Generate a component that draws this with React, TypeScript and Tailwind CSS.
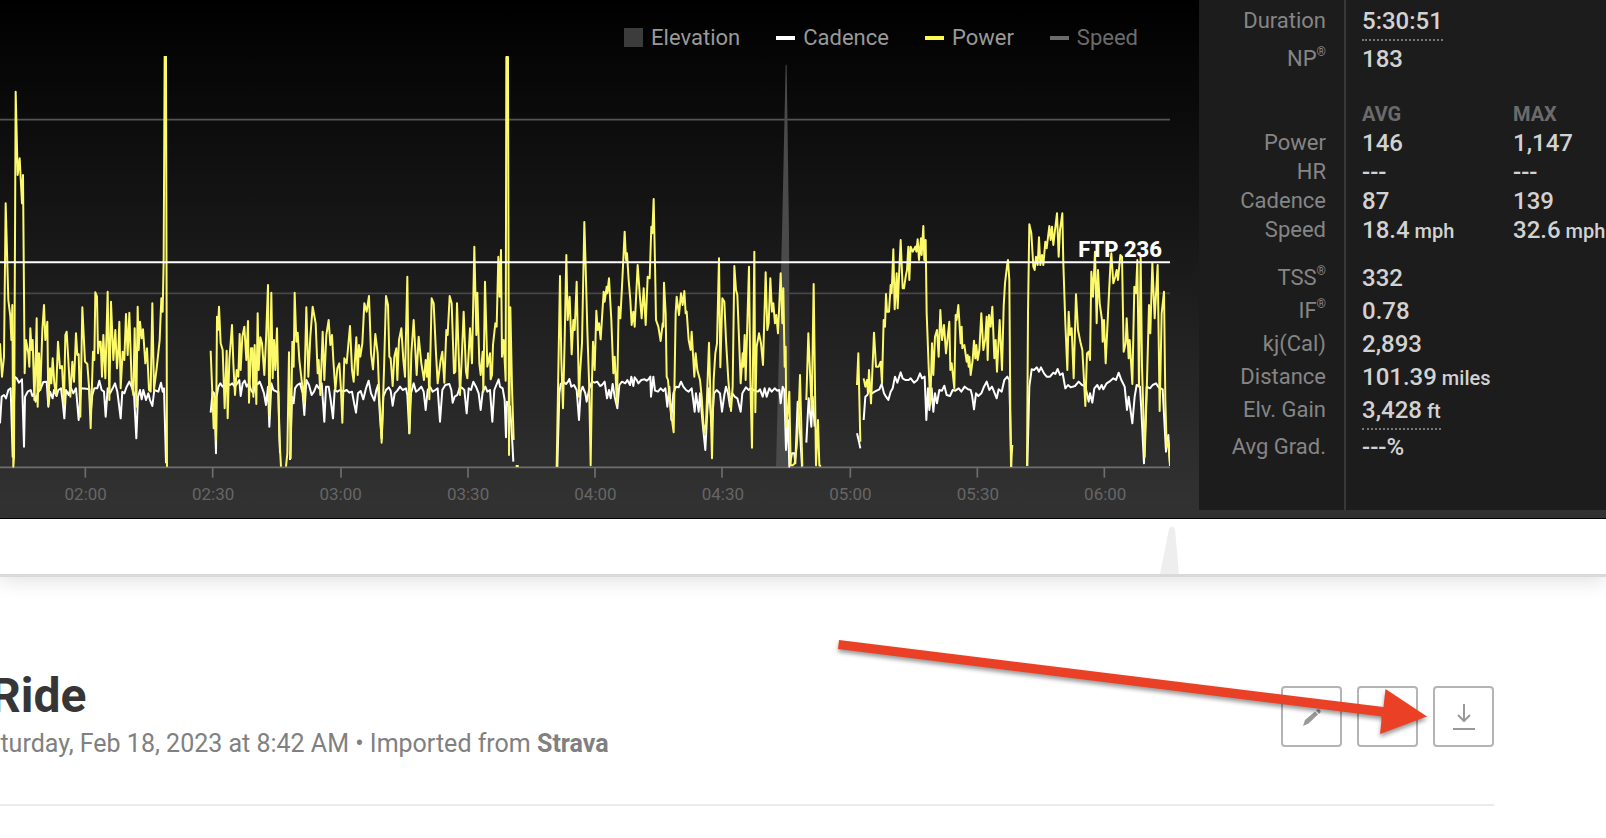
import type { ReactNode } from "react";

interface Segment {
  x: number;
  y: number;
  power: string[];
  cadence: string[];
}

interface StatRow {
  label: string;
  registered?: boolean;
  avg: string;
  max?: string;
  unit?: string;
  dotted?: boolean;
  className: string;
}

// Samples are stored per stretch of the ride, at three units per pixel
const segments: Segment[] = [
  {
    x: 0,
    y: 120,
    power: [
      "0,910 6,1010 12,950 17,490 25,780 31,830 34,900 37,795 40,1280 42,1250 47,155 53,405 59,355 66,490 69,405 74,1000 78,900 85,940 88,980 91,865 95,930 98,900 103,1080 106,1000 110,835 113,1100 117,940 121,1050 127,870 132,795 136,900 142,845 145,1095 150,985 154,1030 158,955 163,1030 168,1065 174,905 180,985 186,978 192,1095 196,885 200,875 205,960 211,1070 217,965 222,1025 228,880 232,945 236,942 241,1130 247,802 255,965 262,972 267,1040 272,1165 279,935 283,960 286,757 291,770 294,940 298,905 302,905 306,1010 310,885 316,1015 323,755 328,1080 333,785 340,960 346,870 351,985 355,930 358,845 362,1045 368,935 373,960 378,822 383,945 388,818 395,1030 400,1065 404,865 409,1100 413,800 416,930 420,845 425,895 429,868 436,970 441,925 447,1050 452,1055 457,790 462,1050 470,985 479,900 484,775 488,815 491,660 494,50 498,50 501,1280",
    ],
    cadence: [
      "0,1150 5,1070 12,1065 18,1075 25,1050 32,1045 38,1250 44,1010 50,1015 57,1028 66,1018 72,1220 75,1070 83,1055 92,1050 97,1068 103,1060 107,1085 113,1060 122,1045 130,1026 140,1025 145,1100 150,1055 158,1075 162,1050 170,1068 175,1050 183,1045 188,1085 193,1135 198,1050 206,1065 212,1042 220,1060 228,1045 236,1140 243,1045 260,1046 268,1048 272,1120 277,1065 283,1045 292,1045 298,1022 305,1050 312,1055 317,1130 323,1045 330,1060 338,1045 345,1030 352,1055 362,1135 367,1055 373,1060 380,1040 388,1025 397,1045 402,1060 409,1195 414,1070 420,1050 425,1078 430,1050 438,1080 445,1060 450,1080 457,1098 463,1050 475,1055 483,1028 488,1055 492,1045 498,1270",
    ],
  },
  {
    x: 600,
    y: 660,
    power: [
      "32,392 41,625 45,530 48,660 51,290 54,330 57,260 62,370 68,390 74,565 80,392 83,595 88,420 96,315 100,430 105,525 110,450 115,470 119,342 122,450 127,350 133,320 139,420 144,303 147,548 153,385 157,385 160,530 164,375 169,552 173,280 176,450 181,352 186,370 193,465 198,360 204,195 208,588 214,218 218,475 222,360 226,450 231,325 238,650 243,740",
      "258,740 262,700 267,397 272,715 277,365 281,440 284,218 289,365 293,338 298,420 306,490 312,550 319,262 325,470 331,350 338,260 347,310 353,460 356,420 361,525 368,335 373,480 379,345 386,300 391,375 396,345 400,420 406,510 412,445 418,430 423,510 427,608 433,415 440,430 450,318 456,450 461,485 469,352 473,465 477,375 481,410 487,370 493,250 500,275 507,228 513,400 519,448 526,342 533,400 538,530 545,668 552,450 558,228 564,255 568,410 572,415 578,498 583,410 589,385 592,480 597,360 604,325 610,420 615,470 622,170 628,640 634,400 641,300 650,465 656,350 664,430 672,480 677,420 681,470 684,400 688,538 695,235 701,250 708,400 713,490 722,420 727,395 733,488 739,330 743,345 749,228 755,250 762,460 766,455 771,250 780,525 785,420 791,275 798,455 802,475 810,325 816,430 823,80 829,345 832,218 838,430 842,465 848,395 850,515 855,185 862,440 870,400 872,478 876,465 879,375 886,310 890,320 895,110 899,230 903,90 906,410 911,360 917,482 919,-489 924,-489 927,705 931,262 936,500 941,660",
      "947,738 956,738",
    ],
    cadence: [
      "32,578 38,515 43,520 48,700 50,530 55,500 61,490 68,500 75,498 82,490 90,495 97,490 104,500 112,490 118,480 122,528 128,490 134,482 140,500 147,490 153,510 160,520 166,495 173,492 179,485 185,500 192,520 198,555 204,500 208,620 214,490 220,510 230,515 235,515 240,700",
      "270,720 276,530 281,550 285,505 292,495 300,490 308,520 313,585 319,480 327,495 335,525 342,515 350,495 357,505 365,490 373,605 378,500 386,500 392,540 399,595 404,510 412,515 420,510 430,515 440,510 448,518 456,515 462,548 468,578 474,520 482,513 490,538 498,505 506,482 513,520 523,542 529,510 534,495 540,590 545,655 550,530 558,510 566,502 572,512 578,557 584,520 592,512 600,500 608,510 618,505 622,525 628,640 633,520 641,490 648,515 655,510 664,500 671,515 677,570 683,510 690,500 698,515 706,510 713,505 720,605 727,510 736,495 748,492 754,510 758,548 764,530 772,525 780,500 788,505 793,510 800,580 806,505 813,510 820,485 828,500 836,520 842,570 848,515 856,500 862,515 870,510 877,605 883,510 889,495 896,478 900,500 908,505 914,540 918,652 921,545 930,560 936,650 940,725",
    ],
  },
  {
    x: 1500,
    y: 540,
    power: [
      "170,860 180,288 184,540 189,685 194,480 199,225 203,420 209,350 215,523 220,420 224,450 230,305 237,650 240,580 246,490 253,126 257,260 262,450 267,600 272,856 276,600 279,485 284,570 289,392 293,450 297,430 302,478 311,335 314,365 320,320 322,340 327,295 334,420 340,580 344,530 351,670 356,380 361,415 366,320 374,155 378,240 381,220 386,300 391,360 395,435 400,395 404,440 413,255 419,340 425,415 431,325 437,435 443,290 449,295 454,140 457,160 461,57 465,250 468,420 475,440 482,483 488,430 490,440 492,308 497,400 500,590 504,600 512,690 521,757 527,400 530,350 537,405 543,340 548,375 553,333 557,400 560,395 566,480 572,510 575,455 583,590 587,520 592,570 600,600 605,650 612,760 618,730 627,488 636,835 641,600 646,520 651,490 657,235 661,562 667,355 673,365 678,480 685,600 693,693 698,620 703,258 708,330 712,345 718,500 722,610 728,520 730,560 734,465 737,600 747,260 751,600 756,803 763,215 766,697 770,500 777,460 783,490 789,555 797,277 802,450 806,430 811,295 816,395 820,370 825,430 829,405 834,460 842,280 847,430 850,325 854,560 857,500 859,740 863,700 868,635 872,856 878,856 884,850 890,800 896,700 900,585 907,858",
      "919,660 925,460 935,690 941,312 948,856 954,720 958,856 963,858",
    ],
    cadence: [
      "172,860 178,640 182,612 190,605 198,612 204,605 208,597 214,620 222,615 230,630 237,720 242,635 248,620 256,640 260,665 268,625 276,605 284,608 292,605 300,618 306,615 314,605 321,655 327,630 332,655 338,612 344,650 352,685 358,615 366,605 376,610 382,600 390,615 394,590 400,618 404,592 410,600 415,610 424,600 434,598 440,602 447,596 451,590 453,650 460,590 465,632 474,635 482,625 490,633 496,625 502,680 508,620 514,720 520,640 528,620 536,622 543,605 550,620 558,630 566,635 575,625 584,695 588,640 596,695 600,640 608,730 616,810 622,690 627,625 635,740 642,640 650,630 660,640 666,695 673,645 678,620 684,640 690,680 697,640 704,650 712,655 722,695 727,640 738,622 746,630 752,625 764,632 774,635 780,628 788,650 794,625 800,650 808,625 815,635 824,625 832,632 838,630 842,670 848,620 853,630 858,810 864,720 868,860 876,820 883,820 886,850 893,665 898,720 906,860",
      "919,788 926,655 934,740 938,650 944,740",
    ],
  },
  {
    x: 2520,
    y: 540,
    power: [
      "51,615 55,520 61,785",
      "71,595 76,620 81,600 84,640 87,570 93,670 102,458 108,560 116,560 122,545 126,610 131,420 135,440 138,342 141,395 147,395 152,315 155,340 160,208 164,388 170,280 173,385 177,290 182,180 188,325 192,325 197,290 201,270 205,200 208,300 212,200 218,215 226,200 229,215 233,178 237,240 243,175 245,225 250,138 253,240 257,180 260,400 266,560 271,673 276,490 280,585 285,470 291,450 296,530 301,390 306,480 312,435 318,520 328,425 331,570 335,550 343,625 347,405 350,420 355,375 362,490 365,440 367,505 373,495 380,545 383,525 386,560 388,530 392,585 398,540 402,482 406,535 409,495 413,540 418,510 424,400 430,510 436,475 440,410 443,540 447,405 452,440 457,380 463,535 467,480 471,575 479,420 486,570 491,380 495,310 502,250 504,240 508,300 511,700 513,858 517,795",
      "561,858 564,400 568,133 574,160 580,260 584,270 588,230 593,255 597,172 601,255 606,225 610,255 616,185 620,205 628,138 632,180 636,140 640,195 645,150 651,100 656,230 660,150 667,100 670,250 676,430 682,570 686,395 690,465 695,445 701,595 708,343 714,450 722,490 727,510 732,600 736,678 741,520 746,515 750,540 754,275 759,350 765,215 770,430 774,270 779,370 786,420 788,485 792,420 797,550 805,380 811,260 814,220 820,310 826,290 830,270 834,300 841,225 846,230 851,515 857,490 860,415 866,535 869,480 877,612 883,320 888,340 892,240 897,620 902,230 906,560 914,830 920,640 927,375 931,460 937,250 944,415 953,255 959,693 965,400 972,335 976,660 980,800 985,785 990,858",
    ],
    cadence: [
      "51,760 57,785 61,805",
      "71,720 76,650 82,645 88,630 96,640 104,635 110,632 118,628 125,612 132,640 138,650 145,660 152,635 158,625 165,590 172,608 182,577 188,595 196,600 206,600 212,595 222,608 232,600 240,580 246,595 254,590 259,720 264,625 268,690 275,625 280,695 285,640 291,670 298,630 306,632 313,617 320,645 330,648 338,630 346,632 356,625 364,635 374,620 384,628 392,630 396,645 402,688 408,640 415,648 424,640 432,620 440,605 448,630 456,620 462,635 470,655 476,628 485,635 493,600 502,590 508,600 514,860",
      "562,858 568,620 575,568 582,570 590,562 597,575 603,562 612,580 620,590 630,590 640,578 646,582 653,567 660,585 668,580 676,625 684,615 692,622 705,618 716,605 726,615 736,618 746,665 750,640 757,668 763,625 772,615 778,628 785,615 790,628 800,610 808,605 820,595 828,600 836,578 844,600 854,620 861,690 866,650 877,730 884,650 890,615 900,620 904,690 912,850 920,620 930,625 938,615 948,610 956,622 968,628 978,815 985,765 990,850",
    ],
  },
];

const ticks = [256, 638, 1023, 1404, 1785, 2166, 2551, 2932, 3313];

const times = [
  "02:00",
  "02:30",
  "03:00",
  "03:30",
  "04:00",
  "04:30",
  "05:00",
  "05:30",
  "06:00",
];

const stats: StatRow[] = [
  { label: "Duration", avg: "5:30:51", dotted: true, className: "h-[42px]" },
  { label: "NP", registered: true, avg: "183", className: "h-[34px]" },
];

const averages: StatRow[] = [
  { label: "Power", avg: "146", max: "1,147", className: "h-[29px]" },
  { label: "HR", avg: "---", max: "---", className: "h-[29px]" },
  { label: "Cadence", avg: "87", max: "139", className: "h-[29px]" },
  { label: "Speed", avg: "18.4", max: "32.6", unit: "mph", className: "h-[29px]" },
];

const totals: StatRow[] = [
  { label: "TSS", registered: true, avg: "332", className: "h-[33px]" },
  { label: "IF", registered: true, avg: "0.78", className: "h-[33px]" },
  { label: "kj(Cal)", avg: "2,893", className: "h-[33px]" },
  { label: "Distance", avg: "101.39", unit: "miles", className: "h-[33px]" },
  { label: "Elv. Gain", avg: "3,428", unit: "ft", dotted: true, className: "h-[33px]" },
  { label: "Avg Grad.", avg: "---%", className: "h-[42px]" },
];

function RideChart() {
  return (
    <svg
      className="block h-[422px] w-full"
      viewBox="0 168 3510 1266"
      preserveAspectRatio="none"
      fill="none"
      role="img"
      aria-label="Power and cadence over time"
    >
      <path d="M0 359H3510" stroke="#545454" strokeWidth="5" />
      <path d="M0 880H3510" stroke="#474747" strokeWidth="5" />
      <path d="M2328 1400L2346 700L2357 194H2360L2367 700L2370 1400Z" fill="#4a4a4a" />
      <path d="M0 1402H3510" stroke="#6e6e6e" strokeWidth="5" />
      {ticks.map((x) => (
        <path key={x} d={`M${x} 1404V1433`} stroke="#6e6e6e" strokeWidth="5" />
      ))}

      {segments.map((segment) => (
        <g
          key={segment.x}
          transform={`translate(${segment.x} ${segment.y})`}
          strokeWidth="6"
          strokeLinejoin="round"
        >
          {segment.cadence.map((points) => (
            <polyline key={points} points={points} stroke="#ffffff" />
          ))}
          {segment.power.map((points) => (
            <polyline key={points} points={points} stroke="#fcf96a" />
          ))}
        </g>
      ))}

      <path d="M0 787H3510" stroke="#ffffff" strokeWidth="6" />
    </svg>
  );
}

function LegendItem({ marker, children }: { marker: string; children: ReactNode }) {
  return (
    <button type="button" className="flex items-center gap-2">
      <span className={marker} />
      {children}
    </button>
  );
}

function StatLine({ row }: { row: StatRow }) {
  return (
    <tr className={row.className}>
      <th
        scope="row"
        className="border-r-2 border-[#383838] pr-[18px] text-right text-[22px] leading-7 font-normal text-[#858585]"
      >
        {row.label}
        {row.registered && (
          <sup className="-top-2.5 text-xs leading-none">®</sup>
        )}
      </th>
      <td className="pl-4 text-2xl leading-7 font-medium">
        <span className={row.dotted ? "border-b-2 border-dotted border-[#777777] pb-1" : ""}>
          {row.avg}
          {row.unit && <span className="text-xl leading-none"> {row.unit}</span>}
        </span>
      </td>
      <td className="text-2xl leading-7 font-medium">
        {row.max}
        {row.max && row.unit && <span className="text-xl leading-none"> {row.unit}</span>}
      </td>
    </tr>
  );
}

function StatsPanel() {
  return (
    <div className="w-[407px] shrink-0 overflow-hidden bg-[#1c1c1c]">
      <table className="w-full table-fixed border-separate border-spacing-0 whitespace-nowrap text-[#d2d2d2]">
        <colgroup>
          <col className="w-[147px]" />
          <col className="w-[167px]" />
          <col />
        </colgroup>
        <tbody>
          {stats.map((row) => (
            <StatLine key={row.label} row={row} />
          ))}
          <tr className="h-[52px] align-bottom text-left text-xl leading-7 text-[#6b6b6b]">
            <td className="border-r-2 border-[#383838]" />
            <th scope="col" className="pl-4 font-bold">AVG</th>
            <th scope="col" className="font-bold">MAX</th>
          </tr>
          {averages.map((row) => (
            <StatLine key={row.label} row={row} />
          ))}
          <tr className="h-[17px]">
            <td className="border-r-2 border-[#383838]" />
          </tr>
          {totals.map((row) => (
            <StatLine key={row.label} row={row} />
          ))}
          <tr className="h-[42px]">
            <td className="border-r-2 border-[#383838]" />
          </tr>
        </tbody>
      </table>
    </div>
  );
}

function ActionButton({ label, children }: { label: string; children: ReactNode }) {
  return (
    <button
      type="button"
      aria-label={label}
      className="flex size-[61px] items-center justify-center rounded border-2 border-[#b4b4b4] bg-white text-[#999999]"
    >
      {children}
    </button>
  );
}

export default function App() {
  return (
    <main className="overflow-hidden bg-white font-[Roboto,'Open_Sans',sans-serif]">

      {/* Ride graph and summary */}
      <section className="flex border-b border-black bg-linear-to-b/srgb from-black to-[#333333] pb-2">
        <div className="min-w-0 flex-1">
          <div className="flex h-14 items-center justify-end gap-9 pt-[19px] pr-[61px] text-[22px] text-[#999999]">
            <LegendItem marker="size-[19px] bg-[#3c3c3c]">Elevation</LegendItem>
            <LegendItem marker="h-1 w-[19px] bg-white">Cadence</LegendItem>
            <LegendItem marker="h-1 w-[19px] bg-[#fcf951]">Power</LegendItem>
            <span className="flex text-[#6b6b6b]">
              <LegendItem marker="h-1 w-[19px] bg-[#6b6b6b]">Speed</LegendItem>
            </span>
          </div>

          <div className="relative mr-[29px]">
            <RideChart />
            <span className="absolute top-[180px] right-2 text-[22px] leading-7 font-extrabold text-white">
              FTP 236
            </span>
          </div>

          <div className="mr-[30px] ml-[22px] grid grid-cols-9 pt-1 text-center text-[17px] leading-6 text-[#666666]">
            {times.map((time) => (
              <span key={time}>{time}</span>
            ))}
          </div>
        </div>

        <StatsPanel />
      </section>

      {/* Elevation strip */}
      <section className="flex h-[58px] items-end justify-end border-b-3 border-[#d9d9d9] pr-[427px] shadow-[0_4px_20px_rgba(0,0,0,0.12)]">
        <svg className="h-12 w-[19px]" viewBox="0 0 19 48" fill="#eeeeee" aria-hidden="true">
          <path d="M0 48L9 3Q12 -2 15 3L19 48Z" />
        </svg>
      </section>

      {/* Ride title and actions */}
      <section className="relative mr-28 flex items-start justify-between border-b-2 border-[#ebebeb] pt-[91px] pb-11">
        <div>
          <h1 className="-ml-2.5 text-5xl leading-[56px] font-bold text-[#363636]">
            Ride
          </h1>
          <p className="-ml-7 pt-1 text-[25px] leading-8 text-[#808080]">
            Saturday, Feb 18, 2023 at 8:42 AM • Imported from{" "}
            <a href="#strava" className="font-bold">Strava</a>
          </p>
        </div>

        <div className="flex gap-[15px] pt-[18px]">
          <ActionButton label="Edit">
            <svg className="size-6" viewBox="0 0 24 24" fill="currentColor">
              <path d="M3 21L5 15L15 6.500L18 9.500L8.500 18.500ZM16 5.500L17.200 4.500Q19 3.500 20.500 5.500Q21 7 20 8L19 9Z" />
            </svg>
          </ActionButton>
          <ActionButton label="Delete">
            <svg className="size-6" viewBox="0 0 24 24" fill="none" stroke="currentColor" strokeWidth="2">
              <path d="M4 6H20M6 6L7 21H17L18 6M10 6V3H14V6" />
            </svg>
          </ActionButton>
          <ActionButton label="Download">
            <svg className="h-7 w-6" viewBox="0 0 24 28" fill="none" stroke="currentColor" strokeWidth="2">
              <path d="M12 1V17M6 12L12 18L18 12M1 26H23" />
            </svg>
          </ActionButton>
        </div>

        <svg
          className="pointer-events-none absolute top-[58px] right-[60px] h-[110px] w-[600px] drop-shadow-[0_3px_2px_rgba(0,0,0,0.4)]"
          viewBox="0 0 600 110"
          fill="#ea4025"
          aria-hidden="true"
        >
          <path d="M5 5L549.500 72L551.500 54L593 81.500L546 99L548 81.500L4 14Z" />
        </svg>
      </section>
    </main>
  );
}
